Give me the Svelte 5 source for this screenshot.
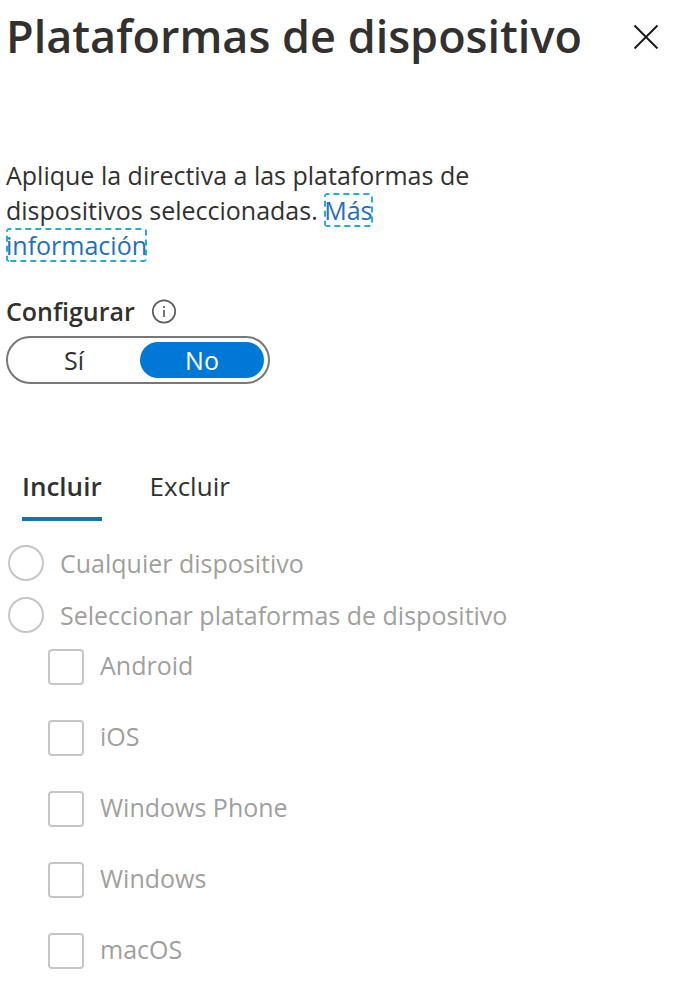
<script>
	let configurar = $state(false);
	let tab = $state('incluir');

	const opciones = [
		{ id: 'cualquiera', texto: 'Cualquier dispositivo' },
		{ id: 'seleccionar', texto: 'Seleccionar plataformas de dispositivo' }
	];
	const plataformas = ['Android', 'iOS', 'Windows Phone', 'Windows', 'macOS'];
</script>

<main class="panel">
	<header>
		<h1>Plataformas de dispositivo</h1>
		<button class="close" aria-label="Cerrar">
			<svg width="26" height="26" viewBox="0 0 26 26">
				<path d="M1.5 2.5l23 23M24.5 2.5l-23 23" />
			</svg>
		</button>
	</header>

	<p class="intro">
		Aplique la directiva a las plataformas de dispositivos seleccionadas.
		<a href="#info">Más información</a>
	</p>

	<div class="label">
		<span id="configurar">Configurar</span>
		<button class="info" aria-label="Ayuda">
			<svg width="26" height="26" viewBox="0 0 26 26">
				<circle cx="13" cy="12.5" r="11.2" />
				<path d="M13 11v7M13 7v2" />
			</svg>
		</button>
	</div>

	<div class="toggle" role="group" aria-labelledby="configurar">
		<button class:active={configurar} aria-pressed={configurar} onclick={() => (configurar = true)}>Sí</button>
		<button class:active={!configurar} aria-pressed={!configurar} onclick={() => (configurar = false)}>No</button>
	</div>

	<div class="tabs" role="tablist">
		<button role="tab" class:selected={tab === 'incluir'} aria-selected={tab === 'incluir'} onclick={() => (tab = 'incluir')}>Incluir</button>
		<button role="tab" class:selected={tab === 'excluir'} aria-selected={tab === 'excluir'} onclick={() => (tab = 'excluir')}>Excluir</button>
	</div>

	<div class="radios">
		{#each opciones as opcion (opcion.id)}
			<label>
				<input type="radio" name="dispositivo" value={opcion.id} disabled={!configurar} />
				<span>{opcion.texto}</span>
			</label>
		{/each}
	</div>

	<div class="checks">
		{#each plataformas as plataforma}
			<label>
				<input type="checkbox" value={plataforma} disabled={!configurar} />
				<span>{plataforma}</span>
			</label>
		{/each}
	</div>
</main>

<style>
	:global(body) {
		margin: 0;
		background: #fff;
	}

	.panel {
		padding: 4px 6px 12px;
		font-family: 'Segoe UI', 'Open Sans', sans-serif;
		font-size: 25px;
		line-height: 35px;
		color: #323130;
	}

	button {
		margin: 0;
		padding: 0;
		border: none;
		background: none;
		font: inherit;
		color: inherit;
		cursor: pointer;
	}

	svg {
		display: block;
		fill: none;
		stroke: #1b1a19;
		stroke-width: 2;
	}

	header {
		display: flex;
		align-items: center;
		justify-content: space-between;
		padding-right: 22px;
	}

	h1 {
		margin: 0;
		font-size: 45px;
		font-weight: 600;
		line-height: 64px;
	}

	.intro {
		max-width: 480px;
		margin: 90px 0 0;
	}

	.intro a {
		color: #1f6fbf;
		text-decoration: none;
		outline: 2px dashed #1fb0d0;
		outline-offset: -2px;
		border-radius: 3px;
	}

	.label {
		display: flex;
		align-items: center;
		gap: 16px;
		margin-top: 31px;
		font-weight: 600;
	}

	.info svg {
		stroke: #605e5c;
		stroke-width: 1.7;
	}

	.toggle {
		display: flex;
		gap: 4px;
		box-sizing: border-box;
		width: 264px;
		height: 48px;
		margin-top: 7px;
		padding: 4px;
		border: 2px solid #7a7877;
		border-radius: 24px;
	}

	.toggle button {
		flex: 1;
		border-radius: 18px;
	}

	.toggle .active {
		background: #0078d7;
		color: #fff;
	}

	.tabs {
		display: flex;
		gap: 48px;
		margin-top: 85px;
		padding-left: 16px;
		font-size: 26px;
	}

	.tabs button {
		padding-bottom: 13px;
		border-bottom: 4px solid transparent;
	}

	.tabs .selected {
		border-color: #1474b0;
		font-weight: 600;
	}

	.radios,
	.checks {
		display: flex;
		flex-direction: column;
		align-items: flex-start;
		color: #a19f9d;
	}

	.radios {
		gap: 16px;
		margin-top: 24px;
		padding-left: 2px;
	}

	.checks {
		gap: 35px;
		margin-top: 16px;
		padding-left: 42px;
	}

	label {
		display: flex;
		align-items: center;
		gap: 16px;
	}

	.checks label {
		align-items: flex-start;
		height: 36px;
		line-height: 33px;
	}

	input {
		appearance: none;
		box-sizing: border-box;
		flex: none;
		width: 36px;
		height: 36px;
		margin: 0;
		border: 2px solid #c8c6c4;
		border-radius: 4px;
		background: #fff;
	}

	input[type='radio'] {
		border-radius: 50%;
	}

	input:checked {
		border-color: #0078d7;
		background: #0078d7;
	}
</style>
